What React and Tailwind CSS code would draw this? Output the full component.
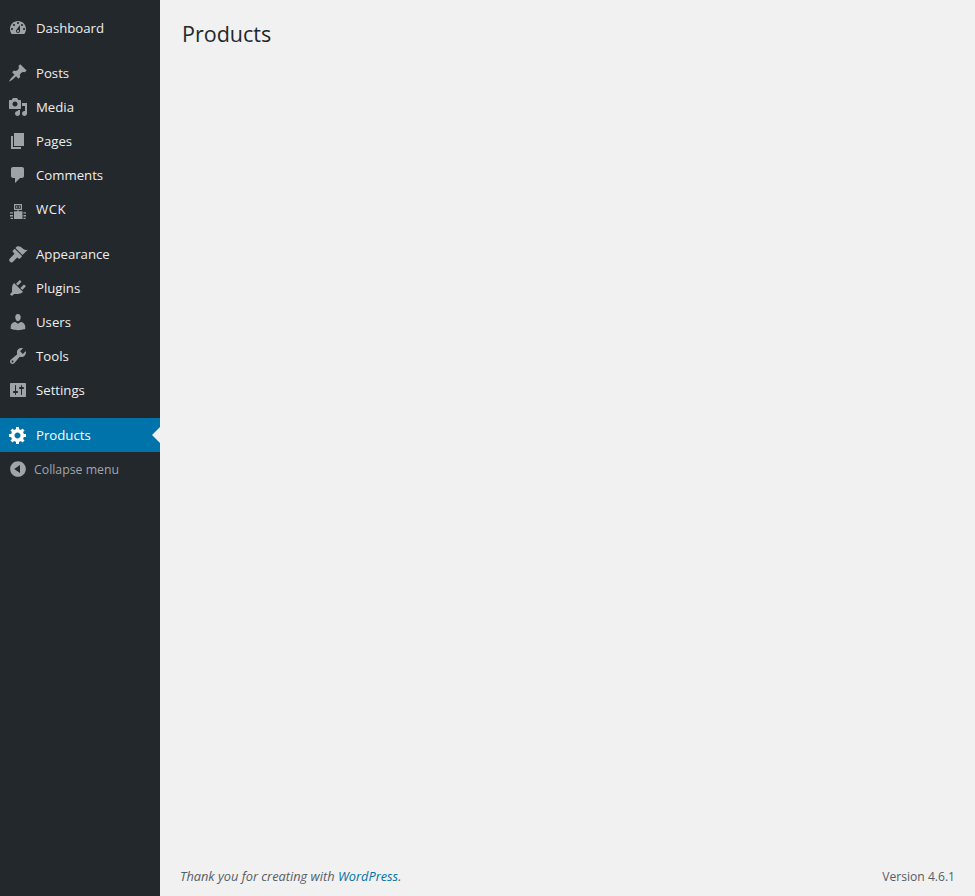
const icons = {
  dashboard: "M3.76 16h12.48c1.1-1.37 1.76-3.11 1.76-5 0-4.42-3.58-8-8-8s-8 3.58-8 8c0 1.89.66 3.63 1.76 5zM10 4c.55 0 1 .45 1 1s-.45 1-1 1-1-.45-1-1 .45-1 1-1zM6 6c.55 0 1 .45 1 1s-.45 1-1 1-1-.45-1-1 .45-1 1-1zm8 0c.55 0 1 .45 1 1s-.45 1-1 1-1-.45-1-1 .45-1 1-1zm-5.37 5.55L12 7v6c0 1.1-.9 2-2 2s-2-.9-2-2c0-.57.24-1.08.63-1.45zM4 10c.55 0 1 .45 1 1s-.45 1-1 1-1-.45-1-1 .45-1 1-1zm12 0c.55 0 1 .45 1 1s-.45 1-1 1-1-.45-1-1 .45-1 1-1zm-5 3c0-.55-.45-1-1-1s-1 .45-1 1 .45 1 1 1 1-.45 1-1z",
  post: "M10.44 3.02l1.82-1.82 6.36 6.35-1.83 1.82c-1.05-.68-2.48-.57-3.41.36l-.75.75c-.92.93-1.04 2.35-.35 3.41l-1.83 1.82-2.41-2.41-2.8 2.79c-.42.42-3.38 2.71-3.8 2.29s1.86-3.39 2.28-3.81l2.79-2.79L4.1 9.36l1.83-1.82c1.05.69 2.48.57 3.4-.36l.75-.75c.93-.92 1.05-2.35.36-3.41z",
  media: "M13 11V4c0-.55-.45-1-1-1h-1.67L9 1H5L3.67 3H2c-.55 0-1 .45-1 1v7c0 .55.45 1 1 1h10c.55 0 1-.45 1-1zM7 4.5c1.38 0 2.5 1.12 2.5 2.5S8.38 9.5 7 9.5 4.5 8.38 4.5 7 5.62 4.5 7 4.5zM14 6h5v10.5c0 1.38-1.12 2.5-2.5 2.5S14 17.88 14 16.5s1.12-2.5 2.5-2.5c.17 0 .34.02.5.05V9h-3V6zm-4 8.05V13h2v3.5c0 1.38-1.12 2.5-2.5 2.5S7 17.88 7 16.5 8.12 14 9.5 14c.17 0 .34.02.5.05z",
  page: "M6 15V2h10v13H6zm-1 1h8v2H3V5h2v11z",
  comments: "M5 2h9c1.1 0 2 .9 2 2v7c0 1.1-.9 2-2 2h-2l-5 5v-5H5c-1.1 0-2-.9-2-2V4c0-1.1.9-2 2-2z",
  wck: "M6 5h8v6h-3.4v1.2H14.5V20H6v-7.8h3.4V11H6V5zm1.2 1.2v3.6h5.6V6.2H7.2zM8 7.3h1.3v1.4H8V7.3zm2.7 0H12v1.4h-1.3V7.3zM2 13.2h3v1.4H2v-1.4zm0 2.8h3v1.4H2V16zm.6 2.8H5V20H2.6v-1.2zM15.5 13.2H18v1.4h-2.5v-1.4zm0 2.8H18v1.4h-2.5V16zm0 2.8h2V20h-2v-1.2z",
  appearance: "M14.48 11.06L7.41 3.99l1.5-1.5c.5-.56 2.3-.47 3.51.32 1.21.8 1.43 1.28 2.91 2.1 1.18.64 2.45 1.26 4.45.85zM13.77 11.77L6.7 4.7 4.93 6.47c-.39.39-.39 1.02 0 1.41l1.06 1.06c.39.39.39 1.03 0 1.42L1.9 14.5c-.9.9-.9 2.3 0 3.2s2.3.9 3.2 0L8.6 14.01c.39-.39 1.02-.39 1.41 0l.56.56c.39.39 1.02.39 1.41 0L13.77 12.78z",
  plugins: "M13.11 4.36L9.87 7.6 8 5.73l3.24-3.24c.35-.34 1.05-.2 1.56.32.52.51.66 1.21.31 1.55zm-8 1.77l.91-1.12 9.01 9.01-1.19.84c-.71.71-2.63 1.16-3.82 1.16H6.14L4.9 17.26c-.59.59-1.54.59-2.12 0-.59-.58-.59-1.53 0-2.12l1.24-1.24v-3.88c0-1.13.4-3.19 1.09-3.89zm7.26 3.97l3.24-3.24c.34-.35 1.04-.21 1.55.31.52.51.66 1.21.31 1.55l-3.24 3.25z",
  users: "M10 9.25c-2.27 0-2.73-3.44-2.73-3.44C7 4.02 7.82 2 9.97 2c2.16 0 2.98 2.02 2.71 3.81 0 0-.41 3.44-2.68 3.44zm0 2.57L12.72 10c2.39 0 4.52 2.33 4.52 4.53v2.49s-3.65 1.13-7.24 1.13c-3.65 0-7.24-1.13-7.24-1.13v-2.49c0-2.25 1.94-4.48 4.47-4.48z",
  tools: "M16.68 9.77c-1.34 1.34-3.3 1.67-4.95.99l-5.41 6.52c-.99.99-2.59.99-3.58 0s-.99-2.59 0-3.57l6.52-5.42c-.68-1.65-.35-3.61.99-4.95 1.28-1.28 3.12-1.62 4.72-1.06l-2.89 2.89 2.82 2.82 2.86-2.87c.53 1.58.18 3.39-1.08 4.65zM3.81 16.21c.4.39 1.04.39 1.43 0 .4-.4.4-1.04 0-1.43-.39-.4-1.03-.4-1.43 0-.39.39-.39 1.03 0 1.43z",
  settings: "M18 16V4c0-.55-.45-1-1-1H3c-.55 0-1 .45-1 1v12c0 .55.45 1 1 1h14c.55 0 1-.45 1-1zM8 11h1c.55 0 1 .45 1 1s-.45 1-1 1H8v1.5c0 .28-.22.5-.5.5s-.5-.22-.5-.5V13H6c-.55 0-1-.45-1-1s.45-1 1-1h1V5.5c0-.28.22-.5.5-.5s.5.22.5.5V11zm5-2h-1c-.55 0-1-.45-1-1s.45-1 1-1h1V5.5c0-.28.22-.5.5-.5s.5.22.5.5V7h1c.55 0 1 .45 1 1s-.45 1-1 1h-1v5.5c0 .28-.22.5-.5.5s-.5-.22-.5-.5V9z",
  generic: "M18 12h-2.18c-.17.7-.44 1.35-.81 1.93l1.54 1.54-2.1 2.1-1.54-1.54c-.58.36-1.23.63-1.91.79V19H8v-2.18c-.68-.16-1.33-.43-1.91-.79l-1.54 1.54-2.12-2.12 1.54-1.54c-.36-.58-.63-1.23-.79-1.91H1V9.03h2.17c.16-.7.44-1.35.8-1.94L2.43 5.55l2.1-2.1 1.54 1.54c.58-.37 1.24-.64 1.93-.81V2h3v2.18c.68.16 1.33.43 1.91.79l1.54-1.54 2.12 2.12-1.54 1.54c.36.59.64 1.24.8 1.94H18V12zm-8.5 1.5c1.66 0 3-1.34 3-3s-1.34-3-3-3-3 1.34-3 3 1.34 3 3 3z",
  collapse: "M10 2.16c4.33 0 7.84 3.51 7.84 7.84s-3.51 7.84-7.84 7.84S2.16 14.33 2.16 10 5.71 2.16 10 2.16zm2 11.72V6.12L6.18 9.97z",
};

function Icon({ name, className }) {
  return (
    <svg viewBox="0 0 20 20" className={`w-5 h-5 shrink-0 fill-current ${className}`}>
      <path d={icons[name]} fillRule="evenodd" />
    </svg>
  );
}

function Item({ icon, label, labelClass = "" }) {
  return (
    <li className="h-[34px] flex items-center pl-2 gap-2 text-[13.2px] leading-[18px] text-[#eeeeee]">
      <Icon name={icon} className="text-[#9ea3a8]" />
      <span className={labelClass}>{label}</span>
    </li>
  );
}

export default function App() {
  return (
    <div className="flex min-h-[896px] bg-[#f1f1f1] font-['Open_Sans',sans-serif] text-[#444444]">
      <aside className="w-[160px] shrink-0 bg-[#23282d] pt-[11px]">
        <ul>
          <Item icon="dashboard" label="Dashboard" />
        </ul>
        <ul className="mt-[11px]">
          <Item icon="post" label="Posts" />
          <Item icon="media" label="Media" />
          <Item icon="page" label="Pages" />
          <Item icon="comments" label="Comments" />
          <Item icon="wck" label="WCK" labelClass="tracking-[0.5px]" />
        </ul>
        <ul className="mt-[11px]">
          <Item icon="appearance" label="Appearance" />
          <Item icon="plugins" label="Plugins" />
          <Item icon="users" label="Users" />
          <Item icon="tools" label="Tools" />
          <Item icon="settings" label="Settings" />
        </ul>
        <ul className="mt-[11px]">
          <li className="relative h-[34px] flex items-center pl-2 gap-2 text-[13.2px] leading-[18px] text-white bg-[#0073aa]">
            <Icon name="generic" className="text-white" />
            <span>Products</span>
            <span className="absolute right-0 top-[9px] w-0 h-0 border-y-[8px] border-y-transparent border-r-[8px] border-r-[#f1f1f1]" />
          </li>
          <li className="h-[34px] flex items-center pl-2 gap-1.5 text-[12.3px] leading-[18px] text-[#a0a5aa]">
            <Icon name="collapse" className="text-[#a0a5aa]" />
            <span className="pt-0.5">Collapse menu</span>
          </li>
        </ul>
      </aside>
      <main className="flex-1 flex flex-col justify-between pl-[22px] pr-5">
        <h1 className="pt-[19px] text-[21.5px] leading-[30px] font-normal text-[#23282d]">Products</h1>
        <footer className="flex justify-between items-start pb-[10px] text-[#555d66]">
          <p className="italic -ml-[2px] leading-[17px] text-[12.8px]">
            Thank you for creating with <a className="text-[#0073aa]">WordPress</a>.
          </p>
          <p className="text-[12.1px] leading-[18px]">Version 4.6.1</p>
        </footer>
      </main>
    </div>
  );
}
